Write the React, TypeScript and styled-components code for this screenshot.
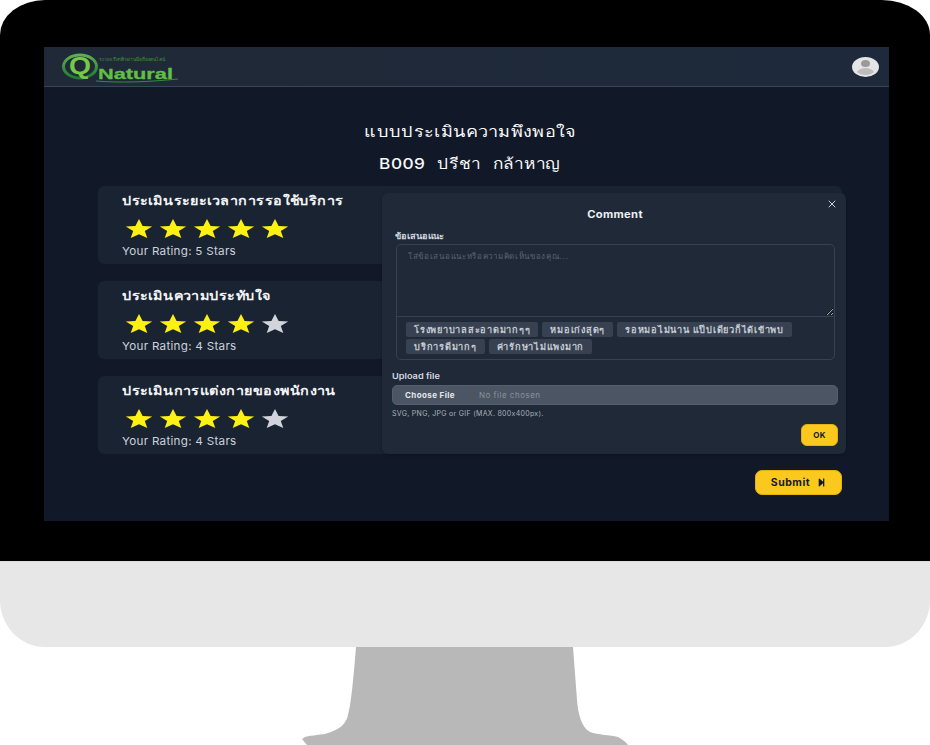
import styled, { createGlobalStyle } from "styled-components";
import { FaStepForward } from "react-icons/fa";
import { X } from "lucide-react";

const Global = createGlobalStyle`
  html, body {
    margin: 0;
    background: #fff;
    overflow: hidden;
  }
  * {
    box-sizing: border-box;
  }
`;

const FONT = `Inter, "Open Sans", "Noto Sans", "DejaVu Sans", sans-serif`;

const Page = styled.div`
  width: 930px;
  height: 745px;
  display: flex;
  flex-direction: column;
  align-items: center;
  font-family: ${FONT};
`;

const Bezel = styled.div`
  width: 930px;
  height: 561px;
  background: #000;
  border-radius: 45px 48px 0 0 / 35px 35px 0 0;
  padding: 47px 41px 40px 44px;
  display: flex;
`;

const Screen = styled.div`
  flex: 1;
  position: relative;
  background: #111827;
  display: flex;
  flex-direction: column;
`;

const Nav = styled.div`
  height: 40px;
  background: linear-gradient(90deg, #1f2937, #1e293b);
  border-bottom: 1px solid #3a4555;
  display: flex;
  justify-content: space-between;
  align-items: center;
  padding: 0 10px 0 16px;
`;

const Logo = styled.svg`
  width: 122px;
  height: 34px;
`;

const Avatar = styled.svg`
  width: 27px;
  height: 20px;
`;

const Main = styled.div`
  flex: 1;
  padding: 35px 47px 0 54px;
  display: flex;
  flex-direction: column;
`;

const Title = styled.div`
  text-align: center;
  color: #f9fafb;
  font-size: 15px;
  line-height: 20px;
  letter-spacing: 0.4px;
  font-weight: 500;
  transform: scaleX(1.2);
`;

const Patient = styled(Title)`
  margin-top: 12px;
  word-spacing: 6px;
  transform: scaleX(1.15);
`;

const Cards = styled.div`
  margin-top: 12px;
  display: flex;
  flex-direction: column;
  gap: 17px;
`;

const Card = styled.div`
  height: 78px;
  background: #1a2332;
  border-radius: 6px;
  padding: 6px 24px 0;
`;

const CardTitle = styled.div`
  color: #f3f4f6;
  font-size: 12.5px;
  font-weight: 700;
  line-height: 17px;
  letter-spacing: 0.3px;
  transform: scaleX(1.15);
  transform-origin: left center;
`;

const Stars = styled.div`
  margin: 10px 0 0 3px;
  display: flex;
  gap: 6px;
`;

const Star = styled.svg<{ $on: boolean }>`
  width: 28px;
  height: 19px;
  fill: ${(p) => (p.$on ? "#fdf014" : "#d1d5db")};
`;

const RatingText = styled.div`
  margin-top: 6px;
  color: #cbd2dc;
  font-size: 11px;
  line-height: 15px;
  letter-spacing: 0.25px;
  transform: scaleX(1.06);
  transform-origin: left center;
`;

const Footer = styled.div`
  margin-top: 16px;
  display: flex;
  justify-content: flex-end;
`;

const Submit = styled.button`
  width: 87px;
  height: 25px;
  background: #fbc91e;
  border: 1px solid #e5b20f;
  border-radius: 7px;
  color: #111827;
  font-family: ${FONT};
  font-size: 10.5px;
  font-weight: 700;
  letter-spacing: 0.5px;
  display: flex;
  align-items: center;
  justify-content: center;
  gap: 7px;
  padding: 0;
`;

const Modal = styled.div`
  position: absolute;
  left: 338px;
  top: 146px;
  width: 464px;
  height: 261px;
  background: #1f2937;
  border-radius: 6px;
  padding: 13px 8px 0 10px;
  display: flex;
  flex-direction: column;
  box-shadow: 0 1px 3px rgba(0, 0, 0, 0.25);
`;

const Close = styled.div`
  position: absolute;
  top: 5px;
  right: 8px;
  color: #cbd2dc;
  display: flex;
`;

const ModalTitle = styled.div`
  text-align: center;
  color: #eef0f3;
  font-size: 10px;
  font-weight: 700;
  line-height: 16px;
  letter-spacing: 0.3px;
  transform: scaleX(1.12);
`;

const Label = styled.div`
  margin-top: 8px;
  padding-left: 3px;
  color: #d6dae0;
  font-size: 8px;
  font-weight: 600;
  line-height: 12px;
  transform: scaleX(1.15);
  transform-origin: left center;
`;

const CommentBox = styled.div`
  margin: 2px 3px 0 4px;
  border: 1px solid #374151;
  border-radius: 5px;
  display: flex;
  flex-direction: column;
`;

const Comment = styled.textarea`
  display: block;
  width: 100%;
  height: 72px;
  background: transparent;
  border: none;
  border-bottom: 1px solid #374151;
  outline: none;
  padding: 5px 11px;
  font-family: ${FONT};
  font-size: 8px;
  letter-spacing: 0.7px;
  color: #e5e7eb;
  &::placeholder {
    color: #5b6573;
  }
`;

const Chips = styled.div`
  padding: 5px 9px 5px;
  display: flex;
  flex-wrap: wrap;
  gap: 2px 4px;
`;

const Chip = styled.div`
  height: 15px;
  padding: 0 8px;
  background: #374151;
  border-radius: 2px;
  color: #c5cbd4;
  font-size: 9.2px;
  font-weight: 600;
  line-height: 15px;
  letter-spacing: 0.75px;
`;

const UploadLabel = styled(Label)`
  margin-top: 10px;
  padding-left: 0;
`;

const FileInput = styled.input`
  display: block;
  margin-top: 3px;
  width: 446px;
  height: 20px;
  background: #4b5563;
  border: 1px solid #545e6c;
  border-radius: 5px;
  color: #8a93a0;
  font-family: ${FONT};
  font-size: 8px;
  letter-spacing: 0.5px;
  line-height: 18px;
  &::file-selector-button {
    height: 18px;
    width: 74px;
    margin-right: 12px;
    background: transparent;
    border: none;
    color: #e5e7eb;
    font-family: ${FONT};
    font-size: 8px;
    letter-spacing: 0.4px;
    font-weight: 700;
  }
`;

const Hint = styled.div`
  margin-top: 3px;
  color: #aab1bc;
  font-size: 7px;
  line-height: 11px;
  letter-spacing: 0.3px;
`;

const ModalFooter = styled.div`
  margin-top: 5px;
  width: 446px;
  display: flex;
  justify-content: flex-end;
`;

const Ok = styled.button`
  width: 37px;
  height: 22px;
  background: #fbc91e;
  border: 1px solid #e5b20f;
  border-radius: 6px;
  color: #111827;
  font-family: ${FONT};
  font-size: 8px;
  font-weight: 700;
  letter-spacing: 0.4px;
  padding: 0;
`;

const Chin = styled.div`
  width: 930px;
  height: 86px;
  background: #e7e7e7;
  border-top: 1px solid #dcdcdc;
  border-radius: 0 0 45px 45px / 0 0 47px 47px;
`;

const Stand = styled.svg`
  display: block;
  width: 330px;
  height: 98px;
  fill: #b8b8b8;
  flex-shrink: 0;
`;

const ratings = [
  { title: "ประเมินระยะเวลาการรอใช้บริการ", value: 5 },
  { title: "ประเมินความประทับใจ", value: 4 },
  { title: "ประเมินการแต่งกายของพนักงาน", value: 4 },
];

const chips = [
  "โรงพยาบาลสะอาดมากๆๆ",
  "หมอเก่งสุดๆ",
  "รอหมอไม่นาน แป๊ปเดียวก็ได้เข้าพบ",
  "บริการดีมากๆ",
  "ค่ารักษาไม่แพงมาก",
];

const StarIcon = ({ on }: { on: boolean }) => (
  <Star $on={on} viewBox="0 0 28 20" preserveAspectRatio="none">
    <path d="M14 0l3.600 7.300 9.600.5-7.400 4.900 2.500 7.300L14 16l-8.300 4 2.500-7.300L.8 7.800l9.600-.5z" />
  </Star>
);

const App = () => {
  return (
    <Page>
      <Global />
      <Bezel>
        <Screen>
          <Nav>
            <Logo viewBox="0 0 122 34">
              <defs>
                <linearGradient id="qring" x1="0" y1="0" x2="0" y2="1">
                  <stop offset="0" stopColor="#5fae52" />
                  <stop offset="1" stopColor="#1f7a34" />
                </linearGradient>
              </defs>
              <ellipse cx="20" cy="16.500" rx="16.500" ry="11.500" fill="none" stroke="url(#qring)" strokeWidth="3" />
              <text x="9" y="24" fontFamily="Liberation Sans" fontSize="24" fontWeight="700" fill="#74c947" textLength="22" lengthAdjust="spacingAndGlyphs">Q</text>
              <text x="38" y="29" fontFamily="Liberation Sans" fontSize="15" fontWeight="700" fill="#62bf45" stroke="#62bf45" strokeWidth="0.3" textLength="75" lengthAdjust="spacingAndGlyphs">Natural</text>
              <text x="39" y="11" fontFamily="Liberation Sans" fontSize="5" fill="#3f9440" textLength="66" lengthAdjust="spacingAndGlyphs">ระบบเรียกคิวผ่านมือถือออนไลน์</text>
              <path d="M36 31c24 2 52 1 82-2" fill="none" stroke="#2f8f3a" strokeWidth="1" />
            </Logo>
            <Avatar viewBox="0 0 27 20">
              <ellipse cx="13.500" cy="10" rx="13.500" ry="10" fill="#e5e5e5" />
              <ellipse cx="13.500" cy="6.500" rx="4.500" ry="3.500" fill="#9a9a9a" />
              <path d="M5 15c2-3 5-4 8.500-4s6.500 1 8.500 4c-2 2-5 3-8.500 3S7 17 5 15z" fill="#bdbdbd" />
            </Avatar>
          </Nav>
          <Main>
            <Title>แบบประเมินความพึงพอใจ</Title>
            <Patient>B009 ปรีชา กล้าหาญ</Patient>
            <Cards>
              {ratings.map((r) => (
                <Card key={r.title}>
                  <CardTitle>{r.title}</CardTitle>
                  <Stars>
                    {[1, 2, 3, 4, 5].map((n) => (
                      <StarIcon key={n} on={n <= r.value} />
                    ))}
                  </Stars>
                  <RatingText>Your Rating: {r.value} Stars</RatingText>
                </Card>
              ))}
            </Cards>
            <Footer>
              <Submit>
                Submit <FaStepForward size={9} />
              </Submit>
            </Footer>
          </Main>
          <Modal>
            <Close>
              <X size={12} />
            </Close>
            <ModalTitle>Comment</ModalTitle>
            <Label>ข้อเสนอแนะ</Label>
            <CommentBox>
              <Comment placeholder="ใส่ข้อเสนอแนะหรือความคิดเห็นของคุณ..." />
              <Chips>
                {chips.map((c) => (
                  <Chip key={c}>{c}</Chip>
                ))}
              </Chips>
            </CommentBox>
            <UploadLabel>Upload file</UploadLabel>
            <FileInput type="file" />
            <Hint>SVG, PNG, JPG or GIF (MAX. 800x400px).</Hint>
            <ModalFooter>
              <Ok>OK</Ok>
            </ModalFooter>
          </Modal>
        </Screen>
      </Bezel>
      <Chin />
      <Stand viewBox="0 0 330 98">
        <path d="M56 0H273L277 53C278 66 281 80 290 85C298 88 310 88 318 90C322 92 326 95 328 98H7L2 92L5 90C12 88 22 88 28 86C38 83 46 78 48 68C50 60 52 50 56 0Z" />
      </Stand>
    </Page>
  );
};

export default App;
